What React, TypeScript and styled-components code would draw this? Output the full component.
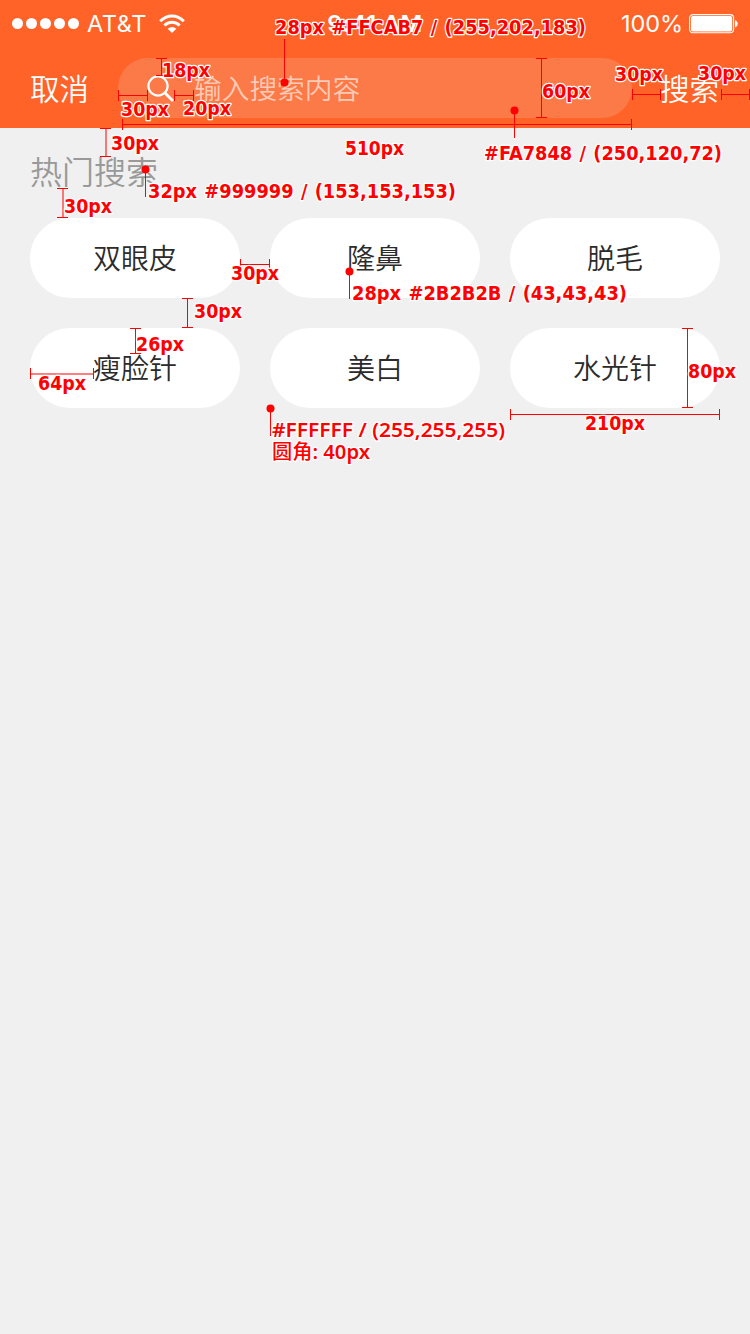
import React from 'react';
import styled, { createGlobalStyle } from 'styled-components';

const GlobalStyle = createGlobalStyle`
  * { box-sizing: border-box; }
  body { margin: 0; background: #f0f0f0; }
  button, input { font-family: inherit; border: 0; padding: 0; background: none; }
`;

const Screen = styled.div`
  position: relative;
  width: 750px;
  height: 1334px;
  overflow: hidden;
  background: #f0f0f0;
  font-family: 'Noto Sans CJK SC', sans-serif;
  font-weight: 350;
`;

const Header = styled.header`
  height: 128px;
  background: #ff6327;
  color: #fff;
`;

const StatusBar = styled.div`
  display: grid;
  grid-template-columns: 1fr auto 1fr;
  align-items: center;
  height: 48px;
  padding: 0 12px;
  font-family: Inter, sans-serif;
  font-size: 23.5px;
  font-weight: 370;
  line-height: 48px;
`;

const Carrier = styled.div`
  display: flex;
  align-items: center;
  svg { display: block; }
  span { width: 59px; margin: 0 13px 0 8px; letter-spacing: 0.6px; white-space: nowrap; }
`;

const Clock = styled.div`
  font-weight: 600;
  letter-spacing: 0.5px;
`;

const Power = styled.div`
  display: flex;
  align-items: center;
  justify-content: flex-end;
  gap: 6px;
  letter-spacing: -0.1px;
`;

const NavBar = styled.div`
  display: flex;
  align-items: center;
  height: 80px;
  padding: 0 30px 0 30px;
`;

const NavButton = styled.button`
  width: 60px;
  height: 60px;
  color: #fff;
  font-size: 29.5px;
  font-weight: 350;
  line-height: 58px;
  padding-bottom: 2px;
  text-align: left;
  white-space: nowrap;
`;

const SearchField = styled.div`
  display: flex;
  align-items: center;
  width: 514px;
  height: 60px;
  margin: 0 28px;
  padding-left: 29px;
  border-radius: 30px;
  background: #fb7a48;
  color: #ffcab7;
  font-size: 27.7px;
  line-height: 58px;
  svg { margin-right: 19px; }
  span { padding-bottom: 2px; }
`;

const Content = styled.main`
  padding: 22px 30px 0;
`;

const Heading = styled.h1`
  height: 68px;
  margin: 0;
  color: #999;
  font-size: 32px;
  font-weight: 350;
  line-height: 40px;
`;

const TagGrid = styled.div`
  display: grid;
  grid-template-columns: repeat(3, 210px);
  gap: 30px;
`;

const Tag = styled.button`
  height: 80px;
  padding-bottom: 2px;
  border-radius: 40px;
  background: #fff;
  color: #2b2b2b;
  font-size: 28px;
  font-weight: 350;
  line-height: 78px;
`;

const Overlay = styled.svg`
  position: absolute;
  top: 0;
  left: 0;
  shape-rendering: crispEdges;
`;

const Label = styled.text<{ $plain?: boolean }>`
  fill: #f00;
  stroke: #fff;
  stroke-width: 2.6px;
  stroke-linejoin: round;
  paint-order: stroke;
  font-family: ${p => (p.$plain ? "'Noto Sans', 'Noto Sans CJK SC', sans-serif" : "'DejaVu Sans', sans-serif")};
  font-size: ${p => (p.$plain ? 20 : 19)}px;
  font-weight: ${p => (p.$plain ? 600 : 700)};
  word-spacing: ${p => (p.$plain ? 0 : 1.2)}px;
`;

const Han = styled.tspan`
  font-weight: 500;
`;

type Span = { from: number; to: number; at: number; soft?: boolean };

const horizontal: Span[] = [
  { from: 118, to: 148, at: 95 },
  { from: 174, to: 194, at: 95 },
  { from: 122, to: 632, at: 124 },
  { from: 632, to: 661, at: 94 },
  { from: 721, to: 750, at: 94 },
  { from: 240, to: 270, at: 264 },
  { from: 30, to: 94, at: 373, soft: true },
  { from: 510, to: 720, at: 414 },
];

const vertical: Span[] = [
  { from: 58, to: 76, at: 161 },
  { from: 58, to: 118, at: 541 },
  { from: 128, to: 157, at: 105, soft: true },
  { from: 188, to: 218, at: 62, soft: true },
  { from: 298, to: 328, at: 187 },
  { from: 328, to: 354, at: 135 },
  { from: 328, to: 408, at: 687 },
];

const pins = [
  { x: 284, y: 82, end: 39 },
  { x: 514, y: 110, end: 138 },
  { x: 145, y: 169, end: 197 },
  { x: 349, y: 271, end: 299 },
  { x: 270, y: 408, end: 436 },
];

type Note = [text: React.ReactNode, x: number, end: number, baseline: number, plain?: boolean];

const notes: Note[] = [
  ['28px #FFCAB7 / (255,202,183)', 275, 586, 34],
  ['18px', 162, 210, 77],
  ['30px', 121, 169, 116],
  ['20px', 183, 231, 115],
  ['60px', 542, 590, 98],
  ['30px', 615, 663, 81],
  ['30px', 698, 746, 80],
  ['510px', 345, 404, 155],
  ['#FA7848 / (250,120,72)', 484, 722, 160],
  ['30px', 111, 159, 150],
  ['30px', 64, 112, 213],
  ['32px #999999 / (153,153,153)', 148, 456, 198],
  ['30px', 231, 279, 280],
  ['28px #2B2B2B / (43,43,43)', 352, 627, 300],
  ['30px', 194, 242, 318],
  ['26px', 136, 184, 351],
  ['64px', 38, 86, 390],
  ['80px', 688, 736, 378],
  ['210px', 585, 645, 430],
  ['#FFFFFF / (255,255,255)', 272, 505, 437, true],
  [<><Han>圆角</Han>: 40px</>, 272, 370, 459, true],
];

const tags = ['双眼皮', '隆鼻', '脱毛', '瘦脸针', '美白', '水光针'];

function Signal() {
  return (
    <svg width="67" height="12" fill="#fff">
      {[0, 1, 2, 3, 4].map(i => <circle key={i} cx={5.5 + i * 14} cy="5.5" r="5.5" />)}
    </svg>
  );
}

function Wifi() {
  return (
    <svg width="26" height="20" viewBox="0 0 26 20" fill="none" stroke="#fff" strokeWidth="3">
      <path d="M1.2 7.2C8 .2 18 .2 24.8 7.2M5.4 11.5C9.7 7.3 16.3 7.3 20.6 11.5" />
      <path d="M8.7 14.8Q13 11 17.3 14.8L13 19Z" fill="#fff" stroke="none" />
    </svg>
  );
}

function Battery() {
  return (
    <svg width="49" height="20" fill="#fff">
      <rect x="0.6" y="0.6" width="44" height="18.2" rx="3.5" fill="none" stroke="#fff" strokeWidth="1.1" />
      <rect x="2" y="2" width="41.2" height="15.4" rx="2" />
      <path d="M46 6Q48.8 7 48.8 9.7T46 13.4Z" />
    </svg>
  );
}

function Magnifier() {
  return (
    <svg width="28" height="28" viewBox="0 0 28 28" fill="none" stroke="#fff" strokeWidth="2.2">
      <circle cx="11" cy="12" r="9.6" />
      <path d="M18 19L26 27" strokeWidth="2.8" />
    </svg>
  );
}

function Annotations() {
  return (
    <Overlay width="750" height="480" fill="#f00">
      {horizontal.map((s, i) => (
        <g key={i}>
          <rect x={s.from} y={s.at} width={s.to - s.from} height={s.soft ? 2 : 1} opacity={s.soft ? 0.5 : 1} />
          <rect x={s.from} y={s.at - 5} width="1" height="11" />
          <rect x={s.to - 1} y={s.at - 5} width="1" height="11" />
        </g>
      ))}
      {vertical.map((s, i) => (
        <g key={i}>
          <rect x={s.at} y={s.from} width={s.soft ? 2 : 1} height={s.to - s.from} opacity={s.soft ? 0.5 : 1} />
          <rect x={s.at - 5} y={s.from} width="11" height="1" />
          <rect x={s.at - 5} y={s.to - 1} width="11" height="1" />
        </g>
      ))}
      {pins.map((p, i) => (
        <g key={i}>
          <rect x={p.x} y={Math.min(p.y, p.end)} width="1" height={Math.abs(p.end - p.y)} />
          <circle cx={p.x + 0.5} cy={p.y + 0.5} r="4" shapeRendering="auto" />
        </g>
      ))}
      {notes.map(([text, x, end, baseline, plain], i) => (
        <Label key={i} x={x} y={baseline} textLength={end - x} lengthAdjust="spacingAndGlyphs" $plain={plain}>
          {text}
        </Label>
      ))}
    </Overlay>
  );
}

export default function App() {
  return (
    <>
      <GlobalStyle />
      <Screen>
        <Header>
          <StatusBar>
            <Carrier><Signal /><span>AT&amp;T</span><Wifi /></Carrier>
            <Clock>9:41 AM</Clock>
            <Power>100%<Battery /></Power>
          </StatusBar>
          <NavBar>
            <NavButton>取消</NavButton>
            <SearchField><Magnifier /><span>输入搜索内容</span></SearchField>
            <NavButton>搜索</NavButton>
          </NavBar>
        </Header>
        <Content>
          <Heading>热门搜索</Heading>
          <TagGrid>{tags.map(t => <Tag key={t}>{t}</Tag>)}</TagGrid>
        </Content>
        <Annotations />
      </Screen>
    </>
  );
}
